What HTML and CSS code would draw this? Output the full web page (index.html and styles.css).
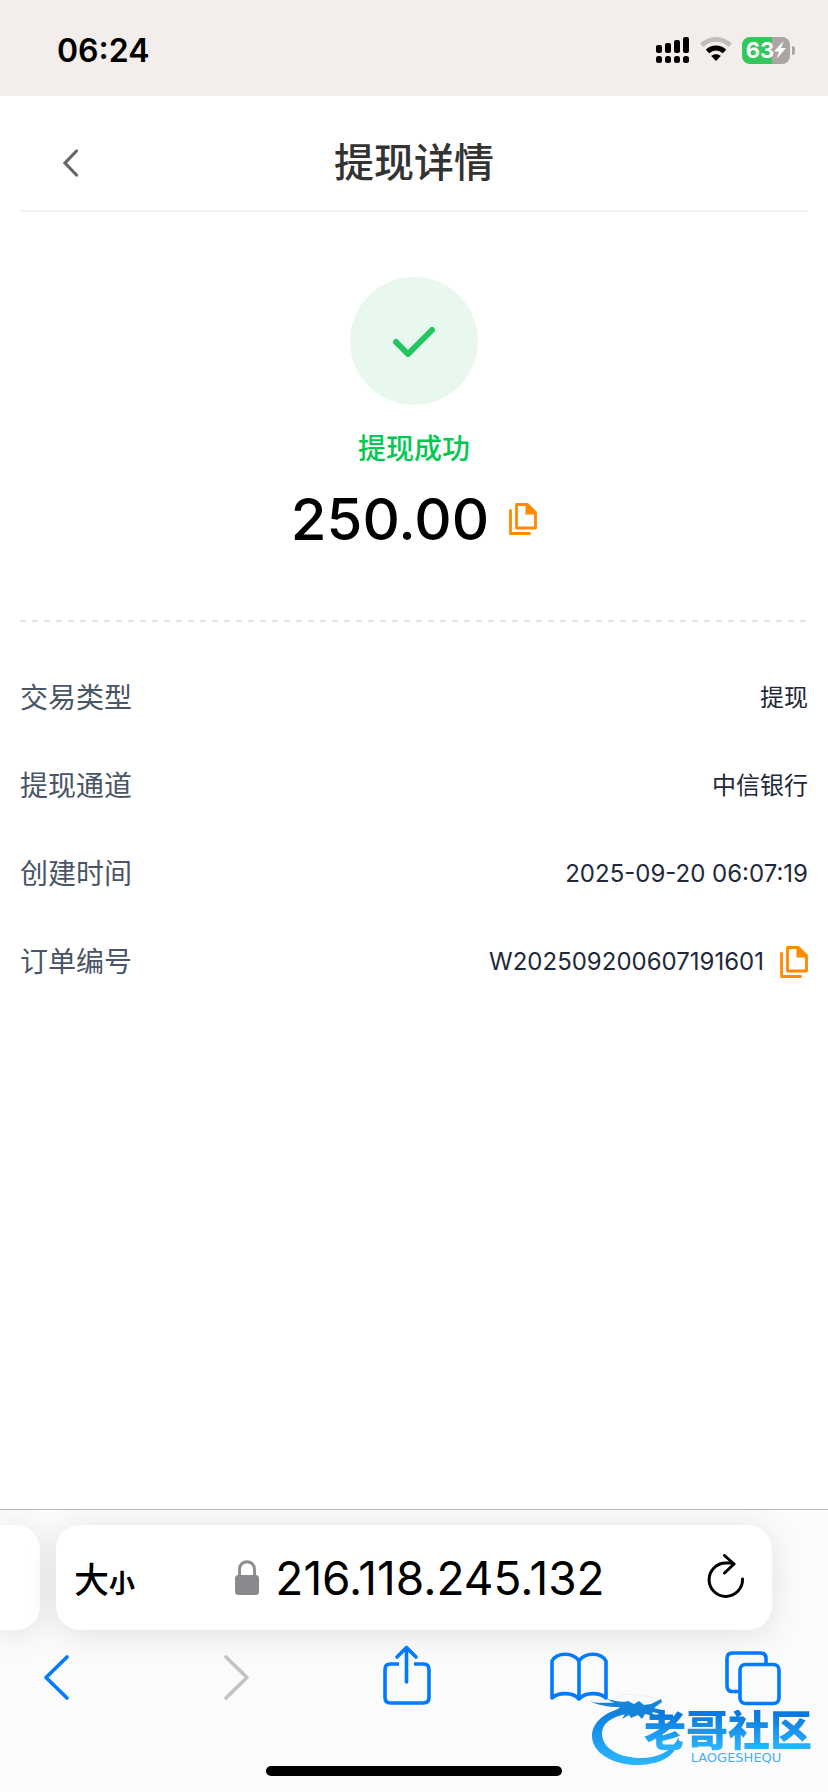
FILE: index.html
```html
<!DOCTYPE html>
<html lang="zh-CN">
<head>
<meta charset="utf-8">
<meta name="viewport" content="width=device-width, initial-scale=1">
<title>提现详情</title>
<link rel="stylesheet" href="styles.css">
</head>
<body>
<div class="status-bar">
  <time class="clock">06:24</time>
  <div class="indicators">
    <svg width="34" height="28" viewBox="0 0 34 28" aria-label="信号">
      <rect x="0" y="9" width="6" height="8" rx="2"/><rect x="9" y="7" width="6" height="10" rx="2"/><rect x="18" y="4" width="6" height="13" rx="2"/><rect x="27" y="1" width="6" height="16" rx="2"/>
      <rect x="0" y="20" width="6" height="7" rx="2.5"/><rect x="9" y="20" width="6" height="7" rx="2.5"/><rect x="18" y="20" width="6" height="7" rx="2.5"/><rect x="27" y="20" width="6" height="7" rx="2.5"/>
    </svg>
    <svg width="32" height="28" viewBox="0 0 32 28" aria-label="无线网络">
      <path d="M1.7 9.3C10 1.3 22 1.3 30.3 9.3" fill="none" stroke="#c1bdbb" stroke-width="4.8"/>
      <path d="M7.5 15.5C12.5 10.8 19.500 10.800 24.500 15.500" fill="none" stroke="#000" stroke-width="5"/>
      <path d="M11.200 20C14 17.600 18 17.600 20.800 20L16 25Z"/>
    </svg>
    <div class="battery"><span>63</span><svg width="12" height="18" viewBox="0 0 12 18"><path d="M9.500 0L0 10.500H5L2.500 18L12 7H7Z" fill="#fff"/></svg></div>
  </div>
</div>

<header class="page-header">
  <button class="icon-button header-back" aria-label="返回"><svg width="20" height="32" viewBox="0 0 20 32"><path d="M16.500 4L5 16L16.500 28" fill="none" stroke="#666" stroke-width="3.200" stroke-linecap="round"/></svg></button>
  <h1>提现详情</h1>
</header>

<main class="content">
  <section class="summary">
    <div class="badge"><svg width="48" height="48" viewBox="0 0 48 48"><path d="M6 25L18 37L42 13" fill="none" stroke="#22c55e" stroke-width="6" stroke-linecap="round" stroke-linejoin="round"/></svg></div>
    <p class="state">提现成功</p>
    <div class="amount-row">
      <span class="amount">250.00</span>
      <button class="icon-button" aria-label="复制金额"><svg class="copy-icon" viewBox="0 0 28 32"><use href="#copy"/></svg></button>
    </div>
  </section>
  <div class="divider"></div>
  <dl class="details">
    <div class="row"><dt>交易类型</dt><dd>提现</dd></div>
    <div class="row"><dt>提现通道</dt><dd>中信银行</dd></div>
    <div class="row"><dt>创建时间</dt><dd>2025-09-20 06:07:19</dd></div>
    <div class="row"><dt>订单编号</dt><dd>W202509200607191601 <button class="icon-button" aria-label="复制订单编号"><svg class="copy-icon" viewBox="0 0 28 32"><use href="#copy"/></svg></button></dd></div>
  </dl>
</main>

<footer class="browser">
  <div class="tabs">
    <div class="tab-previous"></div>
    <div class="address">
      <button class="text-size" aria-label="大小"><span class="large">大</span><span class="small">小</span></button>
      <button class="url"><svg width="24" height="36" viewBox="0 0 24 36"><path d="M4.500 17V9.500C4.500 -1 19.500 -1 19.500 9.500V17" fill="none" stroke="#8e8e93" stroke-width="3"/><rect y="15" width="24" height="20" rx="3.500" fill="#8a898e"/></svg><span>216.118.245.132</span></button>
      <button class="icon-button" aria-label="刷新"><svg width="40" height="48" viewBox="0 0 40 48"><path d="M37.500 25A16.700 16.700 0 1 1 20.800 9H28M19.500 1.500L29 10L19.500 19" fill="none" stroke="#000" stroke-width="3" stroke-linecap="round" stroke-linejoin="round"/></svg></button>
    </div>
  </div>
  <nav class="toolbar">
    <button class="icon-button" aria-label="后退"><svg viewBox="0 0 60 64"><path d="M41 13L20 33.500L41 54"/></svg></button>
    <button class="icon-button" aria-label="前进" disabled><svg viewBox="0 0 60 64"><path d="M26 13L47 33.500L26 54"/></svg></button>
    <button class="icon-button" aria-label="分享"><svg viewBox="0 0 60 64"><path d="M25 20H16.500Q11 20 11 25.500V53.500Q11 59 16.500 59H49.500Q55 59 55 53.500V25.500Q55 20 49.500 20H40" stroke-linecap="butt"/><path d="M32.500 38V4M23 13L32.500 3.500L42 13"/></svg></button>
    <button class="icon-button" aria-label="书签"><svg viewBox="0 0 60 64"><path d="M31 17C25 8 9 8 4 17V54C10 48 25 48 31 55C37 48 52 48 58 54V17C53 8 37 8 31 17V55"/></svg></button>
    <button class="icon-button" aria-label="标签页"><svg viewBox="0 0 60 64"><path d="M17 47.500H10.500Q5 47.500 5 42V14.500Q5 9 10.500 9H38.500Q44 9 44 14.500V20"/><rect x="18" y="20.500" width="39" height="39" rx="5.500"/></svg></button>
  </nav>
  <div class="home-indicator"></div>
  <div class="watermark">
    <svg class="dragon" width="96" height="80" viewBox="0 0 96 80">
      <defs><linearGradient id="blue" x1="0" y1="0" x2="0" y2="1"><stop offset="0" stop-color="#0b7bdc"/><stop offset="1" stop-color="#2cb6ff"/></linearGradient></defs>
      <path fill="url(#blue)" d="M34 18C14 23 4 34 4 46C4 63 26 76 52 75C74 74 90 65 91 47C83 62 70 68 53 68C32 68 14 59 14 43C14 34 23 27 38 24Z"/>
      <path fill="#1585dc" d="M2 11C9 14 16 12 26 13L19 9C28 11 34 13 40 11L46 14L51 11L56 15L63 14L73 9L74 12L66 18L74 20L73 24L64 22L66 26L57 24L54 29L50 25L43 28L41 25L34 29L37 24L30 26L34 21L25 23L32 17C20 17 9 15 2 11Z"/>
      <path fill="none" stroke="#e6f3fa" d="M29 7Q39 2 57 6L70 9"/>
    </svg>
    <div class="brand"><span class="brand-name">老哥社区</span><span class="brand-latin">LAOGESHEQU</span></div>
  </div>
</footer>

<svg class="symbols" aria-hidden="true"><symbol id="copy" viewBox="0 0 28 32">
  <path d="M7.500 1.500H18.500L26.500 9.500V25H7.500Z" fill="none" stroke="#ff8a00" stroke-width="2.800" stroke-linejoin="round"/>
  <path d="M16.500 1V11.500H27V9L19 1Z" fill="#ff8a00"/>
  <path d="M1.500 7.500V30.500H20.500" fill="none" stroke="#ff8a00" stroke-width="2.800" stroke-linecap="round" stroke-linejoin="round"/>
</symbol></svg>
</body>
</html>
```
FILE: styles.css
```css
* { box-sizing: border-box; }
body {
  margin: 0;
  min-height: 100vh;
  display: flex;
  flex-direction: column;
  background: #fff;
  color: #000;
  font-family: Inter, "Noto Sans CJK SC", sans-serif;
  overflow-x: hidden;
}
button { border: 0; padding: 0; background: none; color: inherit; font: inherit; cursor: pointer; }
svg { display: block; flex: none; }
h1, p, dl, dd { margin: 0; }
.symbols { position: absolute; width: 0; height: 0; }
.icon-button { display: flex; align-items: center; justify-content: center; }

.status-bar {
  height: 96px;
  padding: 4px 33px 0 57px;
  display: flex;
  align-items: center;
  justify-content: space-between;
  background: #f3eeeb;
}
.clock { font-size: 32px; font-weight: 600; }
.indicators { display: flex; align-items: center; gap: 10px; }
.battery {
  position: relative;
  width: 48px;
  height: 27px;
  margin-right: 5px;
  border-radius: 8px;
  display: flex;
  align-items: center;
  justify-content: center;
  background: linear-gradient(90deg, #34c759 63%, #aba6a3 63%);
  color: #fff;
  font-size: 22px;
  font-weight: 700;
}
.battery::after {
  content: "";
  position: absolute;
  right: -5px;
  top: 9px;
  width: 3px;
  height: 9px;
  border-radius: 0 4px 4px 0;
  background: #aba6a3;
}

.page-header {
  height: 116px;
  margin: 0 20px;
  padding: 20px 40px 0;
  display: grid;
  grid-template-columns: 40px 1fr 40px;
  align-items: center;
  border-bottom: 2px solid #efefef;
}
.header-back { justify-content: flex-start; }
h1 { color: #333; font-size: 40px; line-height: 56px; font-weight: 500; text-align: center; }

.content { flex: 1; padding: 0 20px; }
.summary {
  padding: 65px 0 71px;
  display: flex;
  flex-direction: column;
  align-items: center;
}
.divider {
  height: 2px;
  background: repeating-linear-gradient(90deg, #e4e4e9 0 6px, transparent 6px 12px);
}
.badge {
  width: 128px;
  height: 128px;
  border-radius: 50%;
  display: flex;
  align-items: center;
  justify-content: center;
  background: #e8f8ee;
}
.state { margin-top: 24px; color: #00c951; font-size: 28px; line-height: 40px; font-weight: 500; }
.amount-row { margin-top: 20px; display: flex; align-items: center; gap: 20px; }
.amount { font-size: 58px; line-height: 60px; font-weight: 500; }
.copy-icon { width: 28px; height: 32px; }

.details { padding-top: 32px; }
.row { height: 88px; display: flex; align-items: center; justify-content: space-between; }
dt { color: #4a5565; font-size: 28px; line-height: 40px; }
dd { display: flex; align-items: center; gap: 16px; color: #1e2939; font-size: 24px; line-height: 32px; }

.browser {
  position: relative;
  border-top: 1px solid #b9b9bd;
  padding: 15px 0 16px;
  background: #fbfbfb;
  overflow: hidden;
}
.tabs { display: grid; grid-template-columns: 40px 1fr; gap: 16px; padding-right: 56px; }
.tab-previous, .address { height: 105px; background: #fff; box-shadow: 0 4px 32px rgba(0, 0, 0, 0.11); }
.tab-previous { border-radius: 0 24px 24px 0; }
.address {
  border-radius: 24px;
  padding: 0 27px 0 18px;
  display: flex;
  align-items: center;
  justify-content: space-between;
}
.text-size { display: flex; align-items: baseline; font-weight: 500; }
.large { font-size: 35px; }
.small { font-size: 26px; font-weight: 700; }
.url { display: flex; align-items: center; gap: 16px; font-size: 46px; }
.toolbar { margin-top: 14px; padding: 0 46px 0 26px; display: flex; justify-content: space-between; }
.toolbar svg {
  width: 60px;
  height: 64px;
  fill: none;
  stroke: #007aff;
  stroke-width: 3.6px;
  stroke-linecap: round;
  stroke-linejoin: round;
}
.toolbar button:disabled svg { stroke: #c2c2c2; }
.home-indicator { width: 296px; height: 10px; margin: 58px auto 0; border-radius: 5px; background: #000; }

.watermark { position: absolute; right: 16px; bottom: 22px; width: 224px; height: 80px; }
.dragon { position: absolute; left: 0; top: 0; }
.brand { position: absolute; right: 0; top: 20px; display: flex; flex-direction: column; align-items: center; }
.brand-name {
  font-size: 42px;
  line-height: 42px;
  font-weight: 900;
  color: transparent;
  background: linear-gradient(#0a78dc 10%, #2cb6ff 95%);
  background-clip: text;
  -webkit-background-clip: text;
}
.brand-latin { padding-left: 16px; color: #48aef0; font-family: "DejaVu Sans", sans-serif; font-size: 13px; line-height: 12px; }
```
